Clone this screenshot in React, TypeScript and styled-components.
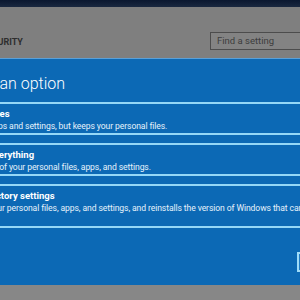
import React from "react";
import styled, { createGlobalStyle } from "styled-components";

const Global = createGlobalStyle`
  html, body { margin: 0; padding: 0; }
  body {
    width: 300px;
    height: 300px;
    overflow: hidden;
    background: #808080;
    font-family: Roboto, "Noto Sans", sans-serif;
  }
`;

const Screen = styled.div`
  width: 300px;
  height: 300px;
  overflow: hidden;
  display: flex;
  flex-direction: column;
  background: #808080;
`;

const TopStrip = styled.div`
  height: 7px;
  flex: none;
  background: linear-gradient(#0b1830, #1a2840);
`;

const Header = styled.div`
  height: 51px;
  flex: none;
  display: flex;
  align-items: flex-end;
  justify-content: space-between;
  padding-bottom: 8px;
  box-sizing: border-box;
  background: #7f7f7f;
`;

const Section = styled.div`
  margin-left: -63px;
  margin-bottom: 3px;
  font-size: 9px;
  font-weight: 700;
  color: #2e2e2e;
  white-space: nowrap;
`;

const Search = styled.div`
  width: 100px;
  height: 18px;
  margin-right: -10px;
  box-sizing: border-box;
  border: 1px solid #4c4c4c;
  background: #838383;
  color: #3d3d3d;
  font-size: 9.5px;
  line-height: 16px;
  padding-left: 6px;
  white-space: nowrap;
`;

const Panel = styled.div`
  height: 227px;
  flex: none;
  box-sizing: border-box;
  border-top: 1px solid #5aa0d8;
  background: #0c69b5;
  display: flex;
  flex-direction: column;
  overflow: hidden;
`;

const Title = styled.div`
  margin: 15px 0 0 -58px;
  height: 20px;
  font-size: 16px;
  font-weight: 300;
  line-height: 20px;
  color: #ffffff;
  white-space: nowrap;
`;

const Options = styled.div`
  margin: 8px 0 0 -60px;
  width: 420px;
  display: flex;
  flex-direction: column;
  gap: 8px;
`;

const Option = styled.div<{ $tall?: boolean }>`
  box-sizing: border-box;
  height: ${(p) => (p.$tall ? 44 : 33)}px;
  border: 2px solid #95d8f7;
  padding: 4px 0 0 10px;
  color: #ffffff;
  white-space: nowrap;
`;

const OptTitle = styled.div`
  font-size: 9.5px;
  font-weight: 700;
  line-height: 12px;
`;

const OptDesc = styled.div`
  font-size: 8.6px;
  letter-spacing: -0.1px;
  line-height: 13px;
  color: #e6f2fb;
`;

const Bottom = styled.div`
  flex: 1;
  background: #878787;
`;

const CancelBtn = styled.div`
  position: absolute;
  left: 297px;
  top: 252px;
  width: 40px;
  height: 20px;
  box-sizing: border-box;
  border: 2px solid #9fdcf8;
  background: #1f7bc4;
`;

export default function App() {
  return (
    <>
      <Global />
      <Screen>
        <TopStrip />
        <Header>
          <Section>UPDATE &amp; SECURITY</Section>
          <Search>Find a setting</Search>
        </Header>
        <Panel>
          <Title>Choose an option</Title>
          <Options>
            <Option>
              <OptTitle>Keep my files</OptTitle>
              <OptDesc>Removes apps and settings, but keeps your personal files.</OptDesc>
            </Option>
            <Option>
              <OptTitle>Remove everything</OptTitle>
              <OptDesc>Removes all of your personal files, apps, and settings.</OptDesc>
            </Option>
            <Option $tall>
              <OptTitle>Restore factory settings</OptTitle>
              <OptDesc>
                Removes your personal files, apps, and settings, and reinstalls the version of Windows that came with your PC.
              </OptDesc>
            </Option>
          </Options>
        </Panel>
        <Bottom />
        <CancelBtn />
      </Screen>
    </>
  );
}
